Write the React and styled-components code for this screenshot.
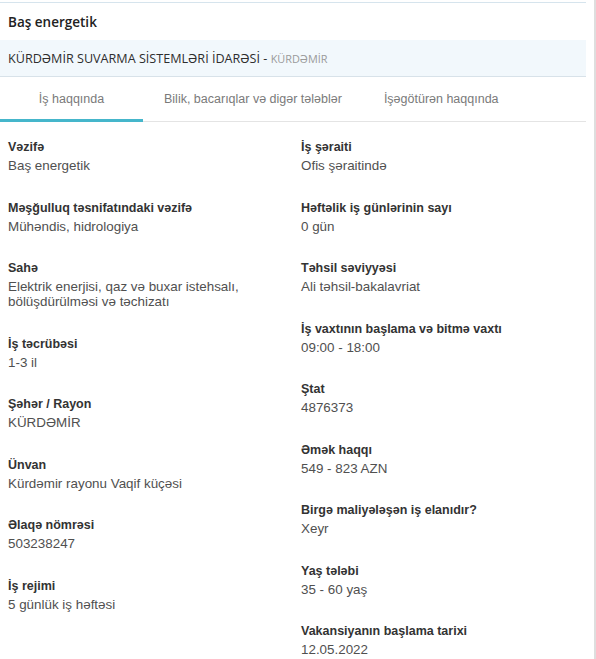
import styled, { createGlobalStyle } from "styled-components";

const GlobalStyle = createGlobalStyle`
  html, body {
    margin: 0;
    padding: 0;
    background: #ffffff;
  }
  #root {
    width: 596px;
    min-height: 659px;
  }
`;

const Page = styled.div`
  display: flex;
  flex-direction: row;
  width: 596px;
  height: 659px;
  overflow: hidden;
  padding-top: 2px;
  box-sizing: border-box;
  background: #ffffff;
`;
const Card = styled.div`
  width: 586px;
  flex-shrink: 0;
  border-top: 1px solid #d6e4ed;
  display: flex;
  flex-direction: column;
`;
const Gutter = styled.div`
  flex: 1;
  border-right: 2px solid #dedede;
  margin-top: -2px;
`;
const Title = styled.div`
  height: 37px;
  display: flex;
  align-items: center;
  padding: 0 8px;
  font-family: "Open Sans", "Noto Sans", sans-serif;
  font-weight: 600;
  font-size: 13.5px;
  color: #222222;
`;
const Company = styled.div`
  height: 36px;
  display: flex;
  align-items: center;
  padding: 0 8px;
  background: #f2f8fc;
  border-bottom: 1px solid #d8e2e9;
  font-family: "Open Sans", "Noto Sans", sans-serif;
  font-size: 12.6px;
  color: #2e2e2e;
  white-space: nowrap;
`;
const City = styled.span`
  font-size: 10.9px;
  color: #9a9a9a;
`;
const TabBar = styled.div`
  display: flex;
  flex-direction: row;
  height: 44px;
  border-bottom: 1px solid #e4e4e4;
`;
const Tab = styled.div`
  position: relative;
  min-width: 143px;
  padding: 0 21px;
  box-sizing: border-box;
  display: flex;
  align-items: center;
  justify-content: center;
  font-family: "Liberation Sans", Arial, sans-serif;
  font-size: 12.5px;
  color: #7a7a7a;
  white-space: nowrap;
  &::after {
    content: "";
    display: ${(p) => (p.$active ? "block" : "none")};
    position: absolute;
    left: 0;
    right: 0;
    bottom: -1px;
    height: 3px;
    background: #45b6cb;
  }
`;
const Details = styled.div`
  display: grid;
  grid-template-columns: 293px 1fr;
  padding: 17px 0 0 8px;
  font-family: "Liberation Sans", Arial, sans-serif;
`;
const Column = styled.div`
  display: flex;
  flex-direction: column;
  gap: 26.5px;
  padding-right: 12px;
`;
const Item = styled.div`
  display: flex;
  flex-direction: column;
`;
const Label = styled.div`
  font-weight: 700;
  font-size: 12.5px;
  line-height: 16px;
  margin-bottom: 3px;
  color: #333333;
`;
const Value = styled.div`
  font-size: 13.4px;
  line-height: 15px;
  color: #505050;
`;

const left = [
  ["Vəzifə", "Baş energetik"],
  ["Məşğulluq təsnifatındaki vəzifə", "Mühəndis, hidrologiya"],
  ["Sahə", "Elektrik enerjisi, qaz və buxar istehsalı, bölüşdürülməsi və təchizatı"],
  ["İş təcrübəsi", "1-3 il"],
  ["Şəhər / Rayon", "KÜRDƏMİR"],
  ["Ünvan", "Kürdəmir rayonu Vaqif küçəsi"],
  ["Əlaqə nömrəsi", "503238247"],
  ["İş rejimi", "5 günlük iş həftəsi"],
];

const right = [
  ["İş şəraiti", "Ofis şəraitində"],
  ["Həftəlik iş günlərinin sayı", "0 gün"],
  ["Təhsil səviyyəsi", "Ali təhsil-bakalavriat"],
  ["İş vaxtının başlama və bitmə vaxtı", "09:00 - 18:00"],
  ["Ştat", "4876373"],
  ["Əmək haqqı", "549 - 823 AZN"],
  ["Birgə maliyələşən iş elanıdır?", "Xeyr"],
  ["Yaş tələbi", "35 - 60 yaş"],
  ["Vakansiyanın başlama tarixi", "12.05.2022"],
];

const tabs = ["İş haqqında", "Bilik, bacarıqlar və digər tələblər", "İşəgötürən haqqında"];

const App = () => {
  return (
    <>
      <GlobalStyle />
      <Page>
        <Card>
          <Title>Baş energetik</Title>
          <Company>
            KÜRDƏMİR SUVARMA SİSTEMLƏRİ İDARƏSİ&nbsp;-&nbsp;<City>KÜRDƏMİR</City>
          </Company>
          <TabBar>
            {tabs.map((t, i) => (
              <Tab key={t} $active={i === 0}>
                {t}
              </Tab>
            ))}
          </TabBar>
          <Details>
            {[left, right].map((col, ci) => (
              <Column key={ci}>
                {col.map(([label, value]) => (
                  <Item key={label}>
                    <Label>{label}</Label>
                    <Value>{value}</Value>
                  </Item>
                ))}
              </Column>
            ))}
          </Details>
        </Card>
        <Gutter />
      </Page>
    </>
  );
};

export default App;
